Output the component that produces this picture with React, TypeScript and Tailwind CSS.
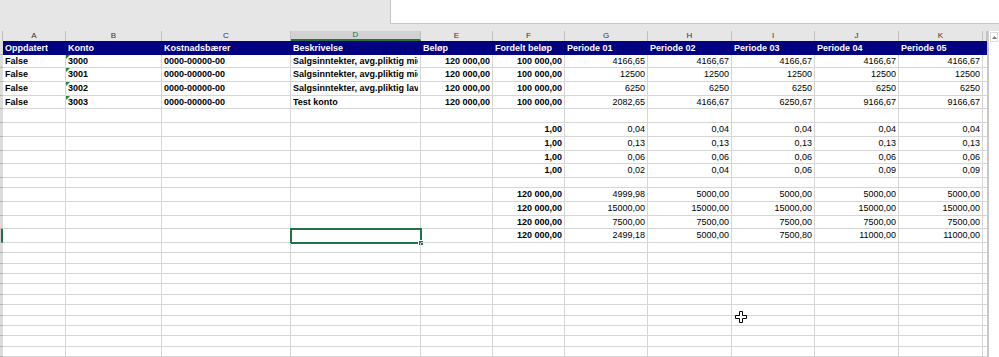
import React from "react";

type Col = { k: string; w: string };
type Cell = { t: string; b?: boolean; r?: boolean; tri?: boolean } | null;
type Row = { h: string; cells: Cell[]; head?: boolean; sel?: boolean };

const COLS: Col[] = [
  { k: "A", w: "w-[63px]" },
  { k: "B", w: "w-[96px]" },
  { k: "C", w: "w-[129px]" },
  { k: "D", w: "w-[130px]" },
  { k: "E", w: "w-[72px]" },
  { k: "F", w: "w-[72px]" },
  { k: "G", w: "w-[83px]" },
  { k: "H", w: "w-[84px]" },
  { k: "I", w: "w-[83px]" },
  { k: "J", w: "w-[84px]" },
  { k: "K", w: "w-[84px]" },
  { k: "L", w: "w-[4px]" },
];

const txt = (t: string): Cell => ({ t, b: true });
const num = (t: string, b = false): Cell => ({ t, b, r: true });
const periods = (vals: string[]) => vals.map((v) => num(v));
const blank = (): Cell[] => COLS.map(() => null);

function account(konto: string, desc: string, p: string[]): Cell[] {
  return [
    txt("False"),
    { t: konto, b: true, tri: true },
    txt("0000-00000-00"),
    txt(desc),
    num("120 000,00", true),
    num("100 000,00", true),
    ...periods(p),
    null,
  ];
}

function share(f: string, p: string[]): Cell[] {
  return [null, null, null, null, null, num(f, true), ...periods(p), null];
}

const ROWS: Row[] = [
  {
    h: "h-[14px]",
    head: true,
    cells: [
      "Oppdatert",
      "Konto",
      "Kostnadsbærer",
      "Beskrivelse",
      "Beløp",
      "Fordelt beløp",
      "Periode 01",
      "Periode 02",
      "Periode 03",
      "Periode 04",
      "Periode 05",
      "Periode 06",
    ].map((t) => ({ t, b: true })),
  },
  { h: "h-[13px]", cells: account("3000", "Salgsinntekter, avg.pliktig middels sats", ["4166,65", "4166,67", "4166,67", "4166,67", "4166,67"]) },
  { h: "h-[14px]", cells: account("3001", "Salgsinntekter, avg.pliktig middels sats", ["12500", "12500", "12500", "12500", "12500"]) },
  { h: "h-[14px]", cells: account("3002", "Salgsinntekter, avg.pliktig lav sats", ["6250", "6250", "6250", "6250", "6250"]) },
  { h: "h-[13px]", cells: account("3003", "Test konto", ["2082,65", "4166,67", "6250,67", "9166,67", "9166,67"]) },
  { h: "h-[14px]", cells: blank() },
  { h: "h-[14px]", cells: share("1,00", ["0,04", "0,04", "0,04", "0,04", "0,04"]) },
  { h: "h-[14px]", cells: share("1,00", ["0,13", "0,13", "0,13", "0,13", "0,13"]) },
  { h: "h-[13px]", cells: share("1,00", ["0,06", "0,06", "0,06", "0,06", "0,06"]) },
  { h: "h-[14px]", cells: share("1,00", ["0,02", "0,04", "0,06", "0,09", "0,09"]) },
  { h: "h-[10px]", cells: blank() },
  { h: "h-[14px]", cells: share("120 000,00", ["4999,98", "5000,00", "5000,00", "5000,00", "5000,00"]) },
  { h: "h-[14px]", cells: share("120 000,00", ["15000,00", "15000,00", "15000,00", "15000,00", "15000,00"]) },
  { h: "h-[13px]", cells: share("120 000,00", ["7500,00", "7500,00", "7500,00", "7500,00", "7500,00"]) },
  { h: "h-[14px]", sel: true, cells: share("120 000,00", ["2499,18", "5000,00", "7500,80", "11000,00", "11000,00"]) },
  ...["h-[10px]", "h-[11px]", "h-[10px]", "h-[10px]", "h-[11px]", "h-[10px]", "h-[11px]", "h-[10px]", "h-[10px]", "h-[11px]", "h-[10px]"].map(
    (h) => ({ h, cells: blank() })
  ),
];

function ColumnLetters() {
  return (
    <div className="flex h-[10px] bg-[#e6e6e6] text-[8px] leading-none text-[#333]">
      <div className="w-[3px] shrink-0 border-r border-[#c0c0c0]" />
      {COLS.map((c) => (
        <div
          key={c.k}
          className={`${c.w} shrink-0 flex items-center justify-center border-r ${
            c.k === "D"
              ? "bg-[#d2d2d2] border-[#c0c0c0] border-b-2 border-b-[#217346] text-[#217346]"
              : "border-[#c0c0c0]"
          }`}
        >
          {c.k === "L" ? "" : c.k}
        </div>
      ))}
    </div>
  );
}

function SheetRow({ row }: { row: Row }) {
  return (
    <div className={`flex ${row.h} ${row.head ? "bg-[#000080] text-white" : "bg-white text-black"}`}>
      <div
        className={`w-[3px] shrink-0 border-b border-[#b4b4b4] ${
          row.sel ? "bg-[#d2d2d2] border-r-2 border-r-[#217346]" : "bg-[#dcdcdc]"
        }`}
      />
      {COLS.map((c, i) => {
        const cell = row.cells[i];
        const selected = row.sel && c.k === "D";
        return (
          <div
            key={c.k}
            className={`${c.w} relative shrink-0 flex items-center whitespace-nowrap px-[2px] ${
              selected ? "overflow-visible" : "overflow-hidden"
            } ${row.head ? "" : "border-r border-b border-[#d6d6d6]"} ${cell?.r ? "justify-end" : ""}`}
          >
            <span className={`min-w-0 overflow-hidden ${cell?.b ? "font-bold" : ""}`}>{cell?.t}</span>
            {cell?.tri && (
              <div className="absolute left-0 top-0 h-0 w-0 border-t-[4px] border-r-[4px] border-t-[#1f8a3c] border-r-transparent" />
            )}
            {selected && (
              <>
                <div className="absolute left-[-1px] top-[-1px] h-[16px] w-[132px] border-2 border-[#217346]" />
                <div className="absolute left-[127px] top-[11px] h-[6px] w-[6px] border border-white bg-[#217346]" />
              </>
            )}
          </div>
        );
      })}
    </div>
  );
}

function Scrollbar() {
  return (
    <div className="flex w-[12px] shrink-0 flex-col border-l-2 border-[#c8c8c8] bg-white">
      <div className="mx-[1px] mt-[1px] flex h-[10px] items-center justify-center border border-[#dcdcdc]">
        <svg width="5" height="3" viewBox="0 0 5 3">
          <path d="M0 3 L2.5 0 L5 3 Z" fill="#7a7a7a" />
        </svg>
      </div>
    </div>
  );
}

function MoveCursor() {
  return (
    <svg
      className="absolute left-[735px] top-[311px]"
      width="12"
      height="12"
      viewBox="0 0 12 12"
    >
      <path
        d="M4.5 0.5 H7.5 V4.5 H11.5 V7.5 H7.5 V11.5 H4.5 V7.5 H0.5 V4.5 H4.5 Z"
        fill="white"
        stroke="black"
        strokeWidth="1"
      />
    </svg>
  );
}

export default function App() {
  return (
    <div className="relative flex h-[357px] w-[999px] flex-col overflow-hidden bg-white font-['Liberation_Sans',Arial,sans-serif] text-[9px] leading-none">
      {/* formula area */}
      <div className="flex h-[31px] shrink-0 bg-[#e6e6e6]">
        <div className="w-[390px] shrink-0" />
        <div className="h-[24px] flex-1 border-b border-l border-[#c6c6c6] bg-white" />
      </div>

      <div className="flex flex-1">
        <div className="w-[987px] shrink-0 overflow-hidden">
          <ColumnLetters />
          {ROWS.map((row, i) => (
            <SheetRow key={i} row={row} />
          ))}
        </div>
        <Scrollbar />
      </div>

      <MoveCursor />
    </div>
  );
}
